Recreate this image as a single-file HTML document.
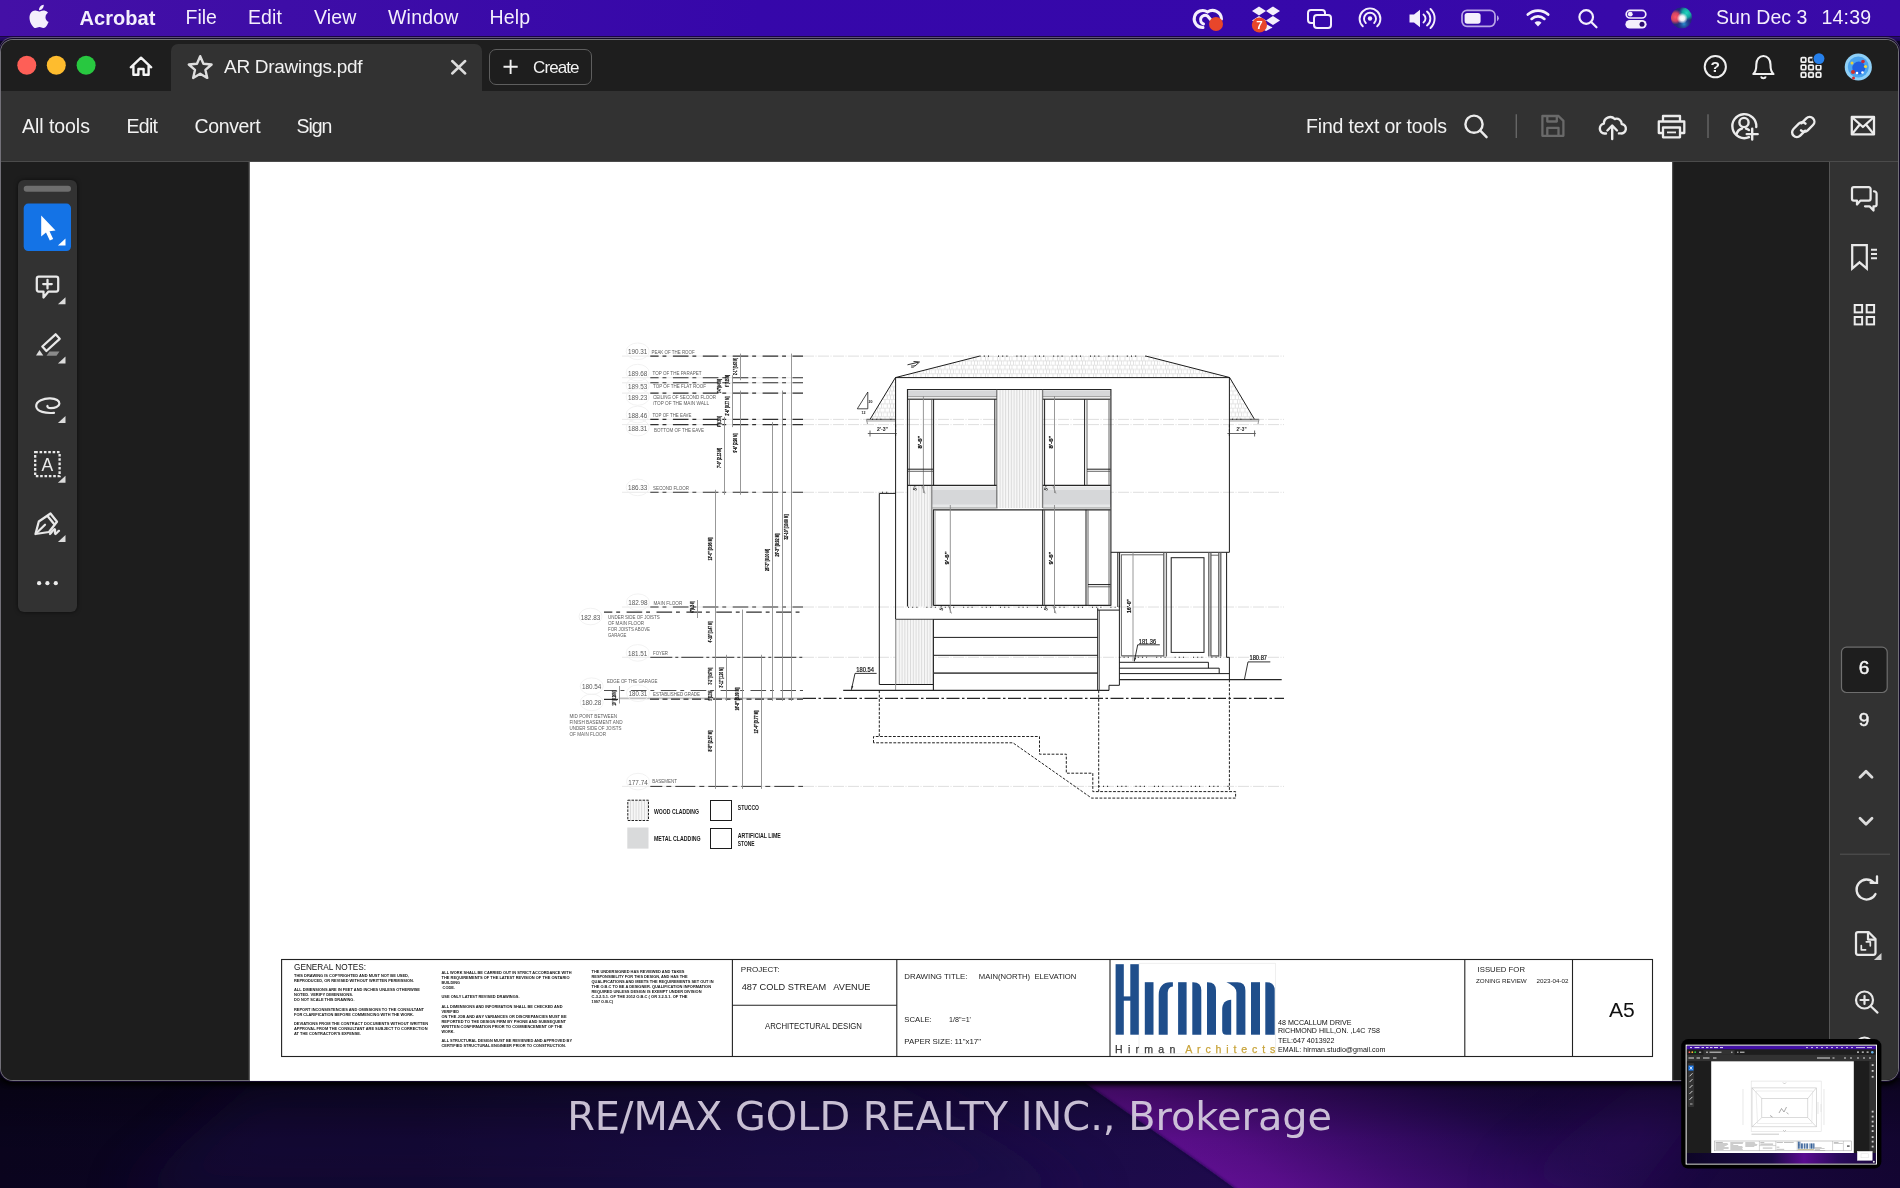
<!DOCTYPE html>
<html lang="en"><head><meta charset="utf-8"><title>AR Drawings.pdf</title>
<style>
html,body{margin:0;padding:0}
body{width:1900px;height:1188px;position:relative;overflow:hidden;background:#0b0420;font-family:"Liberation Sans",sans-serif;color:#fff}
.abs{position:absolute}
.t{position:absolute;white-space:nowrap;line-height:1}
#wall{position:absolute;left:0;top:0;width:1900px;height:1188px;overflow:hidden;background:#0d0526}
#menubar{position:absolute;left:0;top:0;width:1900px;height:36px;background:linear-gradient(90deg,#4410a6 0%,#3e0da7 15%,#3607aa 40%,#3608aa 70%,#3a0aa8 100%)}
#menubar .t{color:#f4effc;font-size:19.5px;top:8px}
#win{position:absolute;left:1px;top:40px;width:1897px;height:1039.5px;border-radius:12px;background:#1e1e1e;overflow:hidden;box-shadow:0 0 0 1px #727078, 0 0 0 2px #120828, 0 -1px 0 2px #5e5078, 0 3px 4px 2px #000}
#titlebar{position:absolute;left:0;top:0;width:1898px;height:50.5px;background:#1e1e1e}
#tab{position:absolute;left:170px;top:3.5px;width:311px;height:48px;background:#323232;border-radius:7px 7px 0 0}
#toolbar{position:absolute;left:-1px;top:50.5px;width:1899px;height:70px;background:#323232;border-bottom:1px solid #4b4b4b}
#toolbar .t{font-size:19.5px;color:#f2f2f2;top:26.5px}
#content{position:absolute;left:0;top:121.5px;width:1898px;height:920px;background:#1d1d1d}
#doc{position:absolute;left:249px;top:121.5px;width:1422px;height:920px;background:#fff}
#rpanel{position:absolute;left:1828px;top:121.5px;width:69px;height:920px;background:#323232;border-left:1px solid #555}
#palette{position:absolute;left:17px;top:140.3px;width:59.3px;height:432px;background:#323232;border-radius:6px;box-shadow:0 0 4px rgba(0,0,0,.6)}
svg{position:absolute;overflow:visible}
#menubar,#win,#dwg,#tb,#icons,#thumb,#wm{opacity:.999}
.ic{fill:none;stroke:#e8e8e8;stroke-width:2.25;stroke-linecap:round;stroke-linejoin:round}
</style></head><body>
<div id="wall">
<svg width="1900" height="1188" viewBox="0 0 1900 1188" style="left:0;top:0">
<defs>
<filter id="bl" x="-20%" y="-50%" width="140%" height="200%"><feGaussianBlur stdDeviation="1.2"/></filter>
<filter id="bl2" x="-20%" y="-50%" width="140%" height="200%"><feGaussianBlur stdDeviation="25"/></filter>
<linearGradient id="wg" x1="0" y1="0" x2="1" y2="0"><stop offset="0" stop-color="#0a041e"/><stop offset="0.22" stop-color="#0d0526"/><stop offset="0.4" stop-color="#160a3e"/><stop offset="0.57" stop-color="#1c0b4a"/><stop offset="0.75" stop-color="#220950"/><stop offset="0.88" stop-color="#1a0742"/><stop offset="1" stop-color="#130532"/></linearGradient>
<linearGradient id="vg" x1="0" y1="0" x2="0" y2="1"><stop offset="0" stop-color="#000" stop-opacity=".6"/><stop offset=".12" stop-color="#000" stop-opacity=".3"/><stop offset=".55" stop-color="#000" stop-opacity=".06"/><stop offset="1" stop-color="#000" stop-opacity="0"/></linearGradient>
<linearGradient id="sw" gradientUnits="userSpaceOnUse" x1="1160" y1="1135" x2="1308" y2="923"><stop offset="0" stop-color="#5f0f91"/><stop offset=".12" stop-color="#590e8b"/><stop offset=".4" stop-color="#3f0b71"/><stop offset=".7" stop-color="#290958"/><stop offset="1" stop-color="#1a0742" stop-opacity="0"/></linearGradient>
<clipPath id="swc"><path d="M1040 1052 L1082 1081 L1100 1093.800 L1180.800 1150 Q1225 1181 1250 1200 L1900 1200 L1900 1052 Z"/></clipPath>
</defs>
<rect x="0" y="1070" width="1900" height="118" fill="url(#wg)"/>
<path d="M250 1085 L900 1085 L1100 1200 L120 1200 Z" fill="#1c0a4a" filter="url(#bl2)" opacity=".45"/>
<g clip-path="url(#swc)"><rect x="1000" y="1070" width="900" height="130" fill="url(#sw)"/></g>
<path d="M1060 1066 L1082 1081 L1100 1093.800 L1180.800 1150 Q1225 1181 1250 1200" fill="none" stroke="#160740" stroke-width="2.500" filter="url(#bl)" opacity=".5"/>
<path d="M1500 1188 L1640 1081 L1720 1081 L1640 1188 Z" fill="#3a0c70" filter="url(#bl2)" opacity=".35"/>
<rect x="0" y="1078" width="1900" height="110" fill="url(#vg)"/>
</svg></div>
<div id="menubar">
<span class="t" style="left:79.5px;font-weight:bold;font-size:20px;top:7.5px;letter-spacing:.05px">Acrobat</span>
<span class="t" style="left:185.5px">File</span>
<span class="t" style="left:248px;letter-spacing:.1px">Edit</span>
<span class="t" style="left:314px;letter-spacing:.15px">View</span>
<span class="t" style="left:388px;letter-spacing:.2px">Window</span>
<span class="t" style="left:489.5px;letter-spacing:.2px">Help</span>
<span class="t" style="left:1716px;letter-spacing:.05px">Sun Dec 3</span>
<span class="t" style="left:1821.5px;letter-spacing:.2px">14:39</span>
</div>
<div class="abs" style="left:0;top:36px;width:1900px;height:5px;background:linear-gradient(180deg,#1a0840 0,#1a0840 1px,#2c0a78 1px,#1c0850 100%)"></div>
<div id="win">
<div id="titlebar"></div>
<div id="tab"></div>
<span class="t" style="left:223px;top:16.5px;font-size:19px;color:#f2f2f2;letter-spacing:-.28px">AR Drawings.pdf</span>
<div class="abs" style="left:487.700px;top:9.300px;width:103.400px;height:35.400px;border:1px solid #5e5e5e;border-radius:7px;box-sizing:border-box"></div>
<span class="t" style="left:532px;top:18.500px;font-size:17px;color:#f2f2f2;letter-spacing:-.9px">Create</span>
<div id="toolbar">
<span class="t" style="left:22px;letter-spacing:-.05px">All tools</span>
<span class="t" style="left:126.5px;letter-spacing:-.7px">Edit</span>
<span class="t" style="left:194.5px;letter-spacing:-.35px">Convert</span>
<span class="t" style="left:296.5px;letter-spacing:-1.1px">Sign</span>
<span class="t" style="left:1306px;letter-spacing:-.18px">Find text or tools</span>
</div>
<div id="content"></div>
<div id="doc"></div>
<div id="rpanel"></div>
<div id="palette"></div>
</div>
<svg id="icons" width="1900" height="1188" viewBox="0 0 1900 1188" style="left:0;top:0;pointer-events:none">
<defs>
<radialGradient id="siri" cx=".5" cy=".5" r=".5"><stop offset="0" stop-color="#e8f0ff"/><stop offset=".35" stop-color="#4fb4e8"/><stop offset=".7" stop-color="#6a3fc8"/><stop offset="1" stop-color="#2a1a6a"/></radialGradient>
<linearGradient id="siri2" x1="0" y1="0" x2="1" y2="1"><stop offset="0" stop-color="#ff3a5e"/><stop offset=".5" stop-color="#45c8f0" stop-opacity=".2"/><stop offset="1" stop-color="#34d0a0"/></linearGradient>
</defs>
<g transform="translate(27.3 4.8) scale(.98 .97)" fill="#f4effc"><path d="M12.152 6.896c-.948 0-2.415-1.078-3.96-1.04-2.04.027-3.91 1.183-4.961 3.014-2.117 3.675-.546 9.103 1.519 12.09 1.013 1.454 2.208 3.09 3.792 3.039 1.52-.065 2.09-.987 3.935-.987 1.831 0 2.35.987 3.96.948 1.637-.026 2.676-1.48 3.676-2.948 1.156-1.688 1.636-3.325 1.662-3.415-.039-.013-3.182-1.221-3.22-4.857-.026-3.04 2.48-4.494 2.597-4.559-1.429-2.09-3.623-2.324-4.39-2.376-2-.156-3.675 1.09-4.61 1.09zM15.53 3.83c.843-1.012 1.4-2.427 1.245-3.83-1.207.052-2.662.805-3.532 1.818-.78.896-1.454 2.338-1.273 3.714 1.338.104 2.715-.688 3.559-1.701"/></g>
<g fill="none" stroke="#f4effc" stroke-width="3" stroke-linecap="round"><path d="M1203 27.5 a8.5 8.5 0 1 1 4.5 -15.5 a9 9 0 0 1 14 7"/><path d="M1203.500 24 a4.500 4.500 0 1 1 4 -8 l6 7"/></g>
<circle cx="1216" cy="24" r="7" fill="#e8462a"/>
<g fill="#f4effc"><path d="M1252 11 L1259 6.4 L1266 11 L1259 15.6 Z"/><path d="M1266 11 L1273 6.4 L1280 11 L1273 15.6 Z"/><path d="M1252 20.5 L1259 15.9 L1266 20.5 L1259 25.1 Z"/><path d="M1266 20.5 L1273 15.9 L1280 20.5 L1273 25.1 Z"/><path d="M1259.5 27.5 L1266 23.9 L1272.5 27.5 L1266 31.1 Z"/></g>
<circle cx="1259.4" cy="25" r="7.6" fill="#e8462a"/><text x="1259.4" y="29" font-family="Liberation Sans, sans-serif" font-size="11.5" font-weight="bold" fill="#fff" text-anchor="middle">7</text>
<g fill="none" stroke="#f4effc" stroke-width="2"><rect x="1308" y="10" width="17" height="13" rx="3"/><rect x="1314" y="15" width="17" height="13" rx="3" fill="#3608aa"/></g>
<g fill="none" stroke="#f4effc" stroke-width="1.9" stroke-linecap="round"><circle cx="1370" cy="18.500" r="2.200" fill="#f4effc" stroke="none"/><path d="M1365.800 23 a6 6 0 1 1 8.400 0"/><path d="M1362.800 26.300 a10.400 10.400 0 1 1 14.400 0"/></g>
<g fill="#f4effc"><path d="M1409.500 14.500 h4.500 l6 -4.800 v17.600 l-6 -4.800 h-4.500 z"/></g><g fill="none" stroke="#f4effc" stroke-width="1.900" stroke-linecap="round"><path d="M1423.500 14.500 a5 5 0 0 1 0 8"/><path d="M1427 11.500 a9 9 0 0 1 0 14"/><path d="M1430.500 9 a13 13 0 0 1 0 19"/></g>
<rect x="1462" y="10.300" width="33" height="16" rx="5" fill="none" stroke="#b9a6e6" stroke-width="1.700"/><rect x="1464.600" y="12.900" width="16" height="10.800" rx="2.600" fill="#f4effc"/><path d="M1497 15.300 a3.400 3.400 0 0 1 0 6 z" fill="#b9a6e6"/>
<g fill="none" stroke="#f4effc" stroke-width="2.700" stroke-linecap="round"><path d="M1527.800 14.600 a15 15 0 0 1 20.400 0"/><path d="M1531.600 18.900 a9.600 9.600 0 0 1 12.800 0"/></g><path d="M1534.500 22.700 a5 5 0 0 1 7 0 l-3.500 3.800 z" fill="#f4effc"/>
<g fill="none" stroke="#f4effc" stroke-width="2.200" stroke-linecap="round"><circle cx="1586.200" cy="17" r="6.800"/><path d="M1591.200 22 l5.300 5.300"/></g>
<rect x="1626.200" y="10.400" width="19.600" height="7.600" rx="3.800" fill="none" stroke="#f4effc" stroke-width="1.700"/><circle cx="1630.300" cy="14.200" r="2.400" fill="#f4effc"/><rect x="1625.400" y="20" width="21.200" height="8.600" rx="4.300" fill="#f4effc"/><circle cx="1642" cy="24.300" r="2.500" fill="#2a0a70"/>
<defs><clipPath id="sc"><circle cx="1681.600" cy="17.900" r="10.600"/></clipPath><radialGradient id="sr"><stop offset="0" stop-color="#ff5566"/><stop offset=".55" stop-color="#f0485e" stop-opacity=".85"/><stop offset="1" stop-color="#e04060" stop-opacity="0"/></radialGradient><radialGradient id="st"><stop offset="0" stop-color="#22d8c0"/><stop offset=".55" stop-color="#14b8a8" stop-opacity=".85"/><stop offset="1" stop-color="#109a98" stop-opacity="0"/></radialGradient><radialGradient id="sb2"><stop offset="0" stop-color="#2a8ed0"/><stop offset="1" stop-color="#1a4a9a" stop-opacity="0"/></radialGradient><radialGradient id="swh"><stop offset="0" stop-color="#fff"/><stop offset=".45" stop-color="#fff" stop-opacity=".9"/><stop offset="1" stop-color="#fff" stop-opacity="0"/></radialGradient></defs><g clip-path="url(#sc)"><circle cx="1681.600" cy="17.900" r="10.600" fill="#222a7c"/><circle cx="1684" cy="24" r="7" fill="url(#sb2)"/><circle cx="1675.500" cy="17" r="7.500" fill="url(#sr)"/><circle cx="1686.500" cy="13" r="8" fill="url(#st)"/><circle cx="1682.300" cy="18.300" r="5.500" fill="url(#swh)"/></g>
<circle cx="26.800" cy="65.300" r="9.500" fill="#fe5f57"/><circle cx="56.300" cy="65.300" r="9.500" fill="#febc2e"/><circle cx="86.100" cy="65.300" r="9.500" fill="#28c840"/>
<path class="ic" d="M130.800 67.300 L141 57.700 L151.200 67.300 M133.400 65.800 V74.800 H138.400 V69 H143.600 V74.800 H148.600 V65.800" style="stroke-width:2.400;stroke:#f4f4f4"/>
<polygon points="200.20,56.20 203.43,63.75 211.61,64.49 205.43,69.90 207.25,77.91 200.20,73.70 193.15,77.91 194.97,69.90 188.79,64.49 196.97,63.75" fill="none" stroke="#dedede" stroke-width="2.400" stroke-linejoin="round"/>
<path d="M452.200 61 L465.200 73.500 M465.200 61 L452.200 73.500" stroke="#dcdcdc" stroke-width="2.500" stroke-linecap="round"/>
<path d="M503.500 66.800 H517.700 M510.600 59.700 V73.900" stroke="#f0f0f0" stroke-width="1.900"/>
<circle cx="1715.300" cy="66.700" r="10.600" fill="none" stroke="#f0f0f0" stroke-width="2"/><text x="1715.300" y="72.200" font-family="Liberation Sans, sans-serif" font-size="15.500" font-weight="bold" fill="#f0f0f0" text-anchor="middle">?</text>
<path d="M1753.300 74 c3.200 -2.600 3 -6 3 -9.500 c0 -5 3 -8.500 7.100 -8.500 c4.100 0 7.100 3.500 7.100 8.500 c0 3.500 -.2 6.900 3 9.500 z" fill="none" stroke="#f0f0f0" stroke-width="2.100" stroke-linejoin="round"/><path d="M1761 76.500 a2.500 2.500 0 0 0 4.800 0" fill="none" stroke="#f0f0f0" stroke-width="2"/>
<g fill="none" stroke="#f0f0f0" stroke-width="1.700"><rect x="1801.2" y="57.6" width="4.600" height="4.600" rx="1"/><rect x="1808.7" y="57.6" width="4.600" height="4.600" rx="1"/><rect x="1816.2" y="57.6" width="4.600" height="4.600" rx="1"/><rect x="1801.2" y="65.1" width="4.600" height="4.600" rx="1"/><rect x="1808.7" y="65.1" width="4.600" height="4.600" rx="1"/><rect x="1816.2" y="65.1" width="4.600" height="4.600" rx="1"/><rect x="1801.2" y="72.6" width="4.600" height="4.600" rx="1"/><rect x="1808.7" y="72.6" width="4.600" height="4.600" rx="1"/><rect x="1816.2" y="72.6" width="4.600" height="4.600" rx="1"/></g>
<circle cx="1819" cy="58.600" r="6.700" fill="#1e1e1e"/><circle cx="1819" cy="58.600" r="5.400" fill="#2680eb"/>
<circle cx="1858.300" cy="67" r="13.600" fill="#8fd0f7"/><circle cx="1858.300" cy="67" r="10.500" fill="#4aa3ee"/><circle cx="1858.800" cy="68" r="6.500" fill="#1f5fe0"/><circle cx="1853" cy="72" r="2" fill="#d0302a"/><circle cx="1852" cy="63" r="1.500" fill="#e8d23a"/><circle cx="1863" cy="61.500" r="1.800" fill="#c8283a"/><circle cx="1865.500" cy="66.500" r="1.600" fill="#f0d840"/><circle cx="1857" cy="73" r="1.300" fill="#fff"/><circle cx="1862.500" cy="72.500" r="1.300" fill="#fff"/><circle cx="1853.500" cy="78" r="1.500" fill="#d03030"/>
<g class="ic" style="stroke:#ececec;stroke-width:2.400"><circle cx="1474" cy="124.200" r="8.600"/><path d="M1480.300 130.600 L1486.600 137.200"/></g>
<path d="M1516.300 114.300 V138" stroke="#666" stroke-width="1.400"/><path d="M1708 114.300 V138" stroke="#666" stroke-width="1.400"/>
<g fill="none" stroke="#6a6a6a" stroke-width="2.300" stroke-linejoin="round"><path d="M1542.400 116 H1558.500 L1563.400 120.900 V135.800 H1542.400 Z"/><path d="M1547.300 116 V121.500 H1556.800 V116"/><path d="M1547.300 135.800 V127.800 H1558.500 V135.800"/></g>
<g class="ic" style="stroke:#ececec;stroke-width:2.400"><path d="M1606 133.500 h-1.500 a5 5 0 0 1 -.6 -9.900 a6.300 6.300 0 0 1 10.800 -4.600 a5.200 5.200 0 0 1 7 5 a4.700 4.700 0 0 1 -1.200 9.400 h-1.600"/><path d="M1612.200 139 V126 M1607.400 130.500 L1612.200 125.500 L1617 130.500"/></g>
<g fill="none" stroke="#ececec" stroke-width="2.300" stroke-linejoin="round"><path d="M1663 121.500 V116 H1680 V121.500"/><path d="M1663 133 H1658.800 V121.500 H1684.300 V133 H1680"/><rect x="1663" y="127.500" width="17" height="9.800"/><path d="M1667 132.400 H1676" stroke-width="1.800"/></g>
<g class="ic" style="stroke:#ececec;stroke-width:2.400"><path d="M1749 137.200 a12 12 0 1 1 7.300 -10.200"/><circle cx="1744" cy="122.500" r="4.600"/><path d="M1736.500 134.500 c1 -4 3.500 -5.500 5.500 -6 M1746 128.500 c1 .3 2 .8 3 1.600"/><path d="M1752.200 128.600 V139.600 M1746.700 134.100 H1757.700"/></g>
<g class="ic" style="stroke:#ececec;stroke-width:2.400"><path d="M1801.300 123.300 l5 -5 a4.700 4.700 0 0 1 6.700 6.700 l-5.300 5.300 a4.700 4.700 0 0 1 -6.700 0"/><path d="M1805.200 130.700 l-5 5 a4.700 4.700 0 0 1 -6.700 -6.700 l5.300 -5.300 a4.700 4.700 0 0 1 6.700 0"/></g>
<g fill="none" stroke="#ececec" stroke-width="2.300" stroke-linejoin="round"><rect x="1851.800" y="117" width="22.200" height="17.400"/><path d="M1851.800 117 L1862.900 127 L1874 117 M1851.800 134.400 L1859.800 124.500 M1874 134.400 L1866 124.500"/></g>
<rect x="23.700" y="185.800" width="47.300" height="6" rx="3" fill="#6e6e6e"/>
<rect x="23.700" y="203.600" width="47.300" height="47.400" rx="4.500" fill="#1473e6"/>
<path d="M41.200 215.500 V236.500 L46 232.500 L49.800 240.500 L53.200 239 L49.500 231.200 L55.500 230.500 Z" fill="#fff"/>
<path d="M65.5 245.5 v-7 l-7.600 7 z" fill="#fff"/>
<path class="ic" d="M38.800 276.700 H56.200 a2 2 0 0 1 2 2 V289.500 a2 2 0 0 1 -2 2 H48.500 L43.500 297.500 V291.500 H38.800 a2 2 0 0 1 -2 -2 V278.700 a2 2 0 0 1 2 -2 Z M47.500 279.800 V288.400 M43.200 284.100 H51.800"/>
<path d="M65.5 304.3 v-7 l-7.600 7 z" fill="#dcdcdc"/>
<g class="ic"><path d="M42.300 346.500 L55.600 334.300 L59.700 338.800 L46.400 351 Z"/></g><path d="M36 355.500 L39.500 350 L43.300 355.500 Z" fill="#dcdcdc"/><path d="M46.500 355.800 L49.500 351.500 H59.500 L56.500 355.800 Z" fill="#8a8a8a"/>
<path d="M65.5 363.4 v-7 l-7.600 7 z" fill="#dcdcdc"/>
<path class="ic" d="M54 412.800 c-8 .8 -17.500 -1 -17.800 -6.500 c-.3 -5.500 8 -8.200 14 -8 c6 .2 9.400 2.600 9.200 5.400 c-.2 2.800 -4.500 4.500 -8.500 4.500 c-2.800 0 -4 -1.200 -3.400 -2.300" style="stroke-width:2.200"/>
<path d="M65.5 423 v-7 l-7.600 7 z" fill="#dcdcdc"/>
<rect x="35.200" y="452.200" width="24.400" height="24" fill="none" stroke="#ececec" stroke-width="2.300" stroke-dasharray="2.600 1.750"/><text x="47.400" y="471" font-family="Liberation Sans, sans-serif" font-size="17.500" fill="#ececec" text-anchor="middle">A</text>
<path d="M65.5 482.8 v-7 l-7.600 7 z" fill="#dcdcdc"/>
<g class="ic"><path d="M35.500 534 L38.800 521.500 L50.500 513.500 L57 521.800 L49 532 Z"/><path d="M36.500 533 L45 524.800"/><path d="M47.500 516 L54.500 524.500"/><path d="M50 534 c2 -2 3.500 -5 4.500 -5 c1.500 0 -.5 5 1 5 c1 0 2 -2.500 3.500 -3.200"/></g>
<path d="M65.5 541.9 v-7 l-7.600 7 z" fill="#dcdcdc"/>
<circle cx="39.100" cy="583.200" r="2.100" fill="#ececec"/><circle cx="47.400" cy="583.200" r="2.100" fill="#ececec"/><circle cx="55.800" cy="583.200" r="2.100" fill="#ececec"/>
<g class="ic"><path d="M1853.800 187.200 H1868.800 a1.800 1.800 0 0 1 1.800 1.800 V198.800 a1.800 1.800 0 0 1 -1.800 1.800 H1860.500 L1857 204.500 V200.600 H1853.800 a1.800 1.800 0 0 1 -1.800 -1.800 V189 a1.800 1.800 0 0 1 1.800 -1.800 Z"/><path d="M1874 191.300 a2.500 2.500 0 0 1 2.600 2.500 V204.500 a1.800 1.800 0 0 1 -1.800 1.800 h-1.300 V210.500 L1869.500 206.300 H1865"/></g>
<g class="ic"><path d="M1852.200 245 H1866.800 V268.500 L1859.500 262.300 L1852.200 268.500 Z" style="stroke-linejoin:miter"/><path d="M1871 249.800 H1877 M1871 254 H1877 M1871 258.200 H1877" style="stroke-width:1.900;stroke-linecap:butt"/></g>
<g fill="none" stroke="#ececec" stroke-width="2"><rect x="1854.700" y="305" width="7.400" height="7.400"/><rect x="1866.700" y="305" width="7.400" height="7.400"/><rect x="1854.700" y="317" width="7.400" height="7.400"/><rect x="1866.700" y="317" width="7.400" height="7.400"/></g>
<rect x="1841.500" y="647.100" width="45.700" height="45.400" rx="5" fill="#1e1e1e" stroke="#6e6e6e" stroke-width="1.200"/>
<text x="1864" y="673.600" font-family="Liberation Sans, sans-serif" font-size="19" fill="#f2f2f2" stroke="#f2f2f2" stroke-width=".45" text-anchor="middle">6</text>
<text x="1864" y="725.600" font-family="Liberation Sans, sans-serif" font-size="19" fill="#f2f2f2" stroke="#f2f2f2" stroke-width=".45" text-anchor="middle">9</text>
<path d="M1860 777.300 L1866 771.300 L1872 777.300" fill="none" stroke="#dcdcdc" stroke-width="2.800" stroke-linecap="round" stroke-linejoin="round"/>
<path d="M1860 818.300 L1866 824.300 L1872 818.300" fill="none" stroke="#dcdcdc" stroke-width="2.800" stroke-linecap="round" stroke-linejoin="round"/>
<path d="M1840 854.200 H1890" stroke="#555" stroke-width="1"/>
<g class="ic" style="stroke-width:2.300"><path d="M1875.500 894 a10 10 0 1 1 -1.800 -11.500"/><path d="M1870.500 882.800 H1877 V876.300" style="stroke-linejoin:miter"/></g>
<g class="ic"><path d="M1858 932 H1868.500 L1875.500 939 V952.800 a2 2 0 0 1 -2 2 H1858 a2 2 0 0 1 -2 -2 V934 a2 2 0 0 1 2 -2 Z"/><path d="M1868 932.500 V939.500 H1875"/><path d="M1861.300 945.500 V949.800 H1865.600 M1870.300 945.800 V941.800 H1866.300" style="stroke-width:1.700"/></g>
<path d="M1881.5 960 v-7 l-7.600 7 z" fill="#cfcfcf"/>
<g class="ic" style="stroke-width:2.200"><circle cx="1864.500" cy="1000" r="8.500"/><path d="M1870.800 1006.300 L1877.500 1012.600"/><path d="M1864.500 996 V1004 M1860.500 1000 H1868.500"/></g>
<g class="ic" style="stroke-width:2.200"><circle cx="1864.500" cy="1046" r="8.500"/><path d="M1860.500 1046 H1868.500"/></g>
</svg>
<svg id="dwg" width="1900" height="1188" viewBox="0 0 1900 1188" style="left:0;top:0;pointer-events:none" font-family="Liberation Sans, sans-serif">
<defs>
<style>
.k{fill:none;stroke:#1c1c1c;stroke-width:1}
.k2{fill:none;stroke:#262626;stroke-width:1.15}
.g{fill:none;stroke:#8c8c8c;stroke-width:.9}
.gd{fill:none;stroke:#555;stroke-width:.9}
.lg{fill:none;stroke:#d6d6d6;stroke-width:.8;stroke-dasharray:11 1.500 1 1.500}
.vl{fill:none;stroke:#e4e4e4;stroke-width:.8}
.lv{fill:none;stroke:#303030;stroke-width:1.08;stroke-dasharray:15.600 3.900 3.900 6.500;stroke-dashoffset:7.300}
.ds{fill:none;stroke:#222;stroke-width:1;stroke-dasharray:2.800 1.500}
.dt{fill:none;stroke:#222;stroke-width:1.100;stroke-dasharray:1 3.200 1 3.200 1 9}
</style>
<pattern id="wood" width="2.800" height="10" patternUnits="userSpaceOnUse"><rect width="2.800" height="10" fill="#f7f7f7"/><path d="M.5 0V10" stroke="#cdcdcd" stroke-width=".7"/></pattern>
<pattern id="shg" width="12" height="8.600" patternUnits="userSpaceOnUse" x="895" y="356.100"><path d="M0 .4H12M0 4.700H12M2 .4V4.700M6.500 .4V4.700M9 .4V4.700M0 4.700V8.600M4.300 4.700V8.600M7.500 4.700V8.600M10.500 4.700V8.600" stroke="#d9d9d9" stroke-width=".7" fill="none"/></pattern>
</defs>
<rect x="250" y="1078" width="1422" height="2.900" fill="#fff"/><rect x="248.700" y="162" width="1.300" height="918.500" fill="#777" opacity=".75"/><rect x="1672" y="162" width="1.200" height="918.500" fill="#5a5a5a" opacity=".8"/>
<path class="lg" d="M803 356.1L1284 356.1" />
<path class="vl" d="M622 356.1L803 356.1" />
<path class="lg" d="M803 419.4L1284 419.4" />
<path class="vl" d="M622 419.4L803 419.4" />
<path class="lg" d="M803 424.6L1284 424.6" />
<path class="vl" d="M622 424.6L803 424.6" />
<path class="lg" d="M803 492.3L1284 492.3" />
<path class="vl" d="M622 492.3L803 492.3" />
<path class="lg" d="M803 607L1284 607" />
<path class="vl" d="M622 607L803 607" />
<path class="lg" d="M803 657.3L1284 657.3" />
<path class="vl" d="M622 657.3L803 657.3" />
<path class="lg" d="M803 786.4L1284 786.4" />
<path class="vl" d="M622 786.4L803 786.4" />
<path class="vl" d="M622 377.7L803 377.7" />
<path class="vl" d="M622 382.8L803 382.8" />
<path class="vl" d="M622 393.1L803 393.1" />
<path d="M895.400 377.600L979.600 356.100L1146 356.100L1229.600 377.500Z" fill="url(#shg)"/>
<path d="M870 419.400L895.400 377.600L895.400 419.400Z" fill="url(#shg)"/>
<path d="M1229.600 377.500L1254.500 419.400L1229.600 419.400Z" fill="url(#shg)"/>
<path class="k" d="M870 419.4L895.4 377.6L979.6 356.1" />
<path class="k" d="M1146 356.1L1229.6 377.5L1254.5 419.4" />
<path class="dt" d="M979.6 356.1L1146 356.1" />
<path class="k" d="M895.4 377.6L1229.6 377.6" />
<rect x="866.500" y="419.300" width="29" height="2.600" fill="#cfcfcf"/><rect x="1229.600" y="419.300" width="29.400" height="2.600" fill="#cfcfcf"/>
<path class="gd" d="M866.5 419.3L895.4 419.3" />
<path class="gd" d="M1229.6 419.3L1259 419.3" />
<path class="g" d="M866.5 419.3L867.5 424" />
<path class="g" d="M1259 419.3L1258 424" />
<path class="dt" d="M872 419.3L893 419.3" />
<path class="dt" d="M1232 419.3L1253 419.3" />
<path class="k" d="M895.6 377.6L895.6 619.3L1097.9 619.3" />
<path class="k" d="M1229.4 377.5L1229.4 552.3L1110.9 552.3" />
<path class="gd" d="M867.8 433.5L896.8 433.5" />
<path class="gd" d="M870 430.5L870 436.5" />
<path class="gd" d="M1227.4 433.5L1255.8 433.5" />
<path class="gd" d="M1254.6 430.5L1254.6 436.5" />
<path class="ds" d="M895.6 424.6L895.6 436" />
<path class="ds" d="M1229.4 424.6L1229.4 436" />
<text x="877" y="431" font-size="5.6" fill="#222" font-weight="bold" text-anchor="start" textLength="11" lengthAdjust="spacingAndGlyphs" >2'-3&quot;</text>
<text x="1236.6" y="431" font-size="5.6" fill="#222" font-weight="bold" text-anchor="start" textLength="10" lengthAdjust="spacingAndGlyphs" >2'-3&quot;</text>
<path class="k" d="M857.3 408.8L867.8 392L867.8 408.8Z" style="stroke-width:.8"/>
<text x="861.5" y="413.6" font-size="3.6" fill="#222" font-weight="bold" text-anchor="start" >12</text>
<text x="868.6" y="403" font-size="3.6" fill="#222" font-weight="bold" text-anchor="start" >20</text>
<path d="M907.500 364.800L918 362.300M913.500 361.500L919.500 362L915 366" class="k" style="stroke-width:.9"/>
<text x="911" y="367.8" font-size="3" fill="#222" font-weight="bold" text-anchor="start" >UP</text>
<rect x="908" y="390.300" width="89.300" height="6.200" fill="#d6d7d9"/><rect x="1042.500" y="390.300" width="68" height="6.200" fill="#d6d7d9"/>
<rect x="932" y="486.400" width="65.500" height="21.500" fill="#e6e7e8"/><rect x="1042.500" y="486.400" width="68" height="21.500" fill="#e6e7e8"/>
<rect x="932" y="490" width="65.500" height="14.500" fill="#d6d7d9"/><rect x="1042.500" y="490" width="68" height="14.500" fill="#d6d7d9"/>
<rect x="997.700" y="390" width="44.800" height="118" fill="url(#wood)"/>
<rect x="908" y="486" width="23.600" height="120.500" fill="url(#wood)"/>
<rect x="896" y="619.800" width="37" height="64.500" fill="url(#wood)"/>
<path class="k2" d="M907.5 606.5L907.5 389.5L1110.9 389.5L1110.9 605.7" />
<path class="gd" d="M908 399.2L997 399.2" style="stroke-width:1.6"/>
<path class="gd" d="M1042.7 399.2L1110.5 399.2" style="stroke-width:1.6"/>
<path class="g" d="M908 396.7L997 396.7" />
<path class="g" d="M1042.7 396.7L1110.5 396.7" />
<path class="k2" d="M908 485.4L997 485.4" />
<path class="k2" d="M1042.7 485.4L1110.5 485.4" />
<path class="gd" d="M909.3 399.2L909.3 485.4" />
<path class="g" d="M923.4 396L923.4 493" />
<path class="gd" d="M931.8 399.2L931.8 485.4" />
<path class="k" d="M933.6 399.2L933.6 485.4" />
<path class="k" d="M994.8 399.2L994.8 485.4" />
<path class="gd" d="M996.8 389.5L996.8 508" />
<path class="k" d="M908 469.2L933 469.2" />
<path class="gd" d="M908 471.3L933 471.3" />
<path class="gd" d="M1042.7 389.5L1042.7 508" />
<path class="k" d="M1044.6 399.2L1044.6 485.4" />
<path class="g" d="M1054.5 396L1054.5 493" />
<path class="k" d="M1084.6 399.2L1084.6 485.4" />
<path class="gd" d="M1087 399.2L1087 485.4" />
<path class="gd" d="M1109 399.2L1109 485.4" />
<path class="k" d="M1087 469.2L1110.5 469.2" />
<path class="gd" d="M1087 471.3L1110.5 471.3" />
<path class="gd" d="M931.8 485.4L931.8 606.5" />
<path class="g" d="M932 508L997.5 508" />
<path class="g" d="M1042.7 508L1110.5 508" />
<path class="k2" d="M933.4 605.4L933.4 509.8L1110.5 509.8" />
<path class="k2" d="M933.4 605.4L1110.9 605.4" />
<path class="g" d="M935 510.5L935 605" />
<path class="g" d="M950.3 505L950.3 613" />
<path class="g" d="M1054.5 505L1054.5 613" />
<path class="k2" d="M1042.7 509.8L1042.7 605.4" />
<path class="gd" d="M1044.6 509.8L1044.6 605.4" />
<path class="k" d="M1086 509.8L1086 605.4" />
<path class="gd" d="M1088 509.8L1088 605.4" />
<path class="gd" d="M1109 509.8L1109 605.4" />
<path class="k" d="M1088 584.6L1110.5 584.6" />
<path class="gd" d="M1088 586.8L1110.5 586.8" />
<path class="dt" d="M908 607.2L1119 607.2" />
<text x="921.7" y="442" font-size="5.8" fill="#111" font-weight="bold" text-anchor="middle" textLength="13" lengthAdjust="spacingAndGlyphs" transform="rotate(-90 921.7 442)" stroke="#111" stroke-width=".2">8'-6&quot;</text>
<text x="1052.7" y="442" font-size="5.8" fill="#111" font-weight="bold" text-anchor="middle" textLength="13" lengthAdjust="spacingAndGlyphs" transform="rotate(-90 1052.7 442)" stroke="#111" stroke-width=".2">8'-6&quot;</text>
<text x="948.6" y="558" font-size="5.8" fill="#111" font-weight="bold" text-anchor="middle" textLength="13" lengthAdjust="spacingAndGlyphs" transform="rotate(-90 948.6 558)" stroke="#111" stroke-width=".2">9'-6&quot;</text>
<text x="1052.7" y="558" font-size="5.8" fill="#111" font-weight="bold" text-anchor="middle" textLength="13" lengthAdjust="spacingAndGlyphs" transform="rotate(-90 1052.7 558)" stroke="#111" stroke-width=".2">9'-6&quot;</text>
<text x="916" y="491" font-size="5" fill="#111" font-weight="bold" text-anchor="start" transform="rotate(-70 916 491)" >5&quot;</text>
<path class="g" d="M922 486L925 493.5" />
<text x="1047" y="491" font-size="5" fill="#111" font-weight="bold" text-anchor="start" transform="rotate(-70 1047 491)" >5&quot;</text>
<path class="g" d="M1053 486L1056 493.5" />
<text x="942.5" y="611" font-size="5" fill="#111" font-weight="bold" text-anchor="start" transform="rotate(-70 942.5 611)" >5&quot;</text>
<path class="g" d="M948.5 606L951.5 613.5" />
<text x="1047" y="611" font-size="5" fill="#111" font-weight="bold" text-anchor="start" transform="rotate(-70 1047 611)" >5&quot;</text>
<path class="g" d="M1053 606L1056 613.5" />
<path class="k" d="M895.6 493.4L879.3 493.4L879.3 684.5L933.2 684.5" />
<path class="dt" d="M882 492.2L889 492.2" />
<path class="g" d="M895.6 619.3L895.6 690.4" />
<path class="k2" d="M933.4 619.3L933.4 690.4" />
<path class="k2" d="M843.2 690.4L1109 690.4" />
<path class="k" d="M933.7 637.4L1097.9 637.4" />
<path class="k" d="M933.7 655.3L1097.9 655.3" />
<path class="gd" d="M933.7 673.1L1097.9 673.1" style="stroke-width:1.700"/>
<path class="k2" d="M1097.7 608.2L1097.7 690.4" />
<path class="gd" d="M1099.4 610L1099.4 690.4" />
<path class="k" d="M1097.7 610.1L1119.4 610.1" />
<path class="k" d="M1119.4 605.7L1119.4 685.3L1109 685.3L1109 690.4" />
<path class="k" d="M876.6 673.4L855 673.4L851.4 689.8" style="stroke-width:.9"/>
<path d="M851.400 689.800l.2-4 1.700.4z" fill="#222"/>
<text x="856.2" y="671.8" font-size="7" fill="#111" font-weight="normal" text-anchor="start" textLength="17.8" lengthAdjust="spacingAndGlyphs" stroke="#111" stroke-width=".2">180.54</text>
<path class="k" d="M1117.8 552.3L1117.8 607" />
<path class="k" d="M1119.6 552.3L1119.6 607" />
<path class="gd" d="M1121.4 554.5L1121.4 655.9" />
<path class="gd" d="M1121.4 554.8L1163.6 554.8" />
<path class="gd" d="M1121.4 655.9L1163.6 655.9" style="stroke-width:1.300;stroke:#5e5e5e"/>
<path class="g" d="M1133 552.3L1133 661" />
<path class="gd" d="M1163.8 552.3L1163.8 656.5" style="stroke-width:1.300;stroke:#5e5e5e"/>
<path class="gd" d="M1166.4 552.3L1166.4 656.5" style="stroke-width:1.300;stroke:#5e5e5e"/>
<rect class="k" x="1171.200" y="557.700" width="32.800" height="94.700"/>
<path class="gd" d="M1208.8 552.3L1208.8 656.5" style="stroke-width:1.300;stroke:#5e5e5e"/>
<path class="gd" d="M1210.9 552.3L1210.9 656.5" style="stroke-width:1.300;stroke:#5e5e5e"/>
<path class="gd" d="M1211 555.2L1219 555.2" />
<path class="gd" d="M1211 655.9L1219 655.9" style="stroke-width:1.300;stroke:#5e5e5e"/>
<path class="gd" d="M1218.8 552.3L1218.8 656.5" style="stroke-width:1.300;stroke:#5e5e5e"/>
<path class="gd" d="M1220.8 552.3L1220.8 656.5" style="stroke-width:1.300;stroke:#5e5e5e"/>
<path class="k" d="M1226.6 552.3L1226.6 657.3" />
<path class="dt" d="M1119.4 657.3L1229.4 657.3" />
<path class="k" d="M1119.4 662.3L1208.4 662.3L1208.4 668.2" />
<path class="k" d="M1119.4 668.2L1219.2 668.2L1219.2 673.6" />
<path class="k" d="M1119.4 673.6L1229.4 673.6" />
<path class="k" d="M1226.5 657.3L1229.4 657.3" />
<path class="k" d="M1229.4 657.3L1229.4 679.6" />
<path class="k2" d="M1119.4 679.6L1281.7 679.6" />
<text x="1131" y="606" font-size="5.4" fill="#111" font-weight="bold" text-anchor="middle" textLength="14" lengthAdjust="spacingAndGlyphs" transform="rotate(-90 1131 606)" stroke="#111" stroke-width=".2">16'-0&quot;</text>
<path class="k" d="M1159.8 644.8L1137.7 644.8L1134.3 661.5" style="stroke-width:.9"/>
<path d="M1134.300 661.500l.1-4 1.700.4z" fill="#222"/>
<text x="1138.8" y="643.8" font-size="7" fill="#111" font-weight="normal" text-anchor="start" textLength="17.4" lengthAdjust="spacingAndGlyphs" stroke="#111" stroke-width=".2">181.36</text>
<path class="k" d="M1270.3 661.9L1248 661.9L1244.4 679.6" style="stroke-width:.9"/>
<text x="1249.5" y="660" font-size="7" fill="#111" font-weight="normal" text-anchor="start" textLength="17.5" lengthAdjust="spacingAndGlyphs" stroke="#111" stroke-width=".2">180.87</text>
<path d="M803 698.4H1284" fill="none" stroke="#262626" stroke-width="1.250" stroke-dasharray="13 2.500 2.500 2.500"/>
<path class="ds" d="M879.3 690.4L879.3 736.5" />
<path class="ds" d="M873.5 742.8L873.5 736.5L1039.5 736.5L1039.5 754.2L1066.3 754.2L1066.3 773.2L1092.8 773.2L1092.8 791.6L1235.6 791.6L1235.6 798.1L1091.6 798.1L1012.9 742.8L873.5 742.8" />
<path class="ds" d="M1098.7 690.4L1098.7 791.3" />
<path class="ds" d="M1229.4 679.6L1229.4 791.3" />
<path class="dt" d="M1098.7 786.4L1229.4 786.4" />
<path class="lv" d="M650.3 356.1L803 356.1" />
<path class="lv" d="M650.3 377.7L803 377.7" />
<path class="lv" d="M650.3 382.8L803 382.8" />
<path class="lv" d="M650.3 393.1L803 393.1" />
<path class="lv" d="M650.3 419.4L803 419.4" />
<path class="lv" d="M650.3 424.6L803 424.6" />
<path class="lv" d="M650.3 492.3L803 492.3" />
<path class="lv" d="M650.3 607L803 607" />
<path d="M650.300 786.4H803" fill="none" stroke="#333" stroke-width="1" stroke-dasharray="20 4 5 4" stroke-dashoffset="8"/>
<path class="lv" d="M604 612.1L803 612.1" />
<path d="M604 690.5H803" fill="none" stroke="#444" stroke-width=".95" stroke-dasharray="15.600 3.900 3.900 6.500" stroke-dashoffset="3"/>
<path d="M650.300 657.3H803" fill="none" stroke="#2e2e2e" stroke-width="1" stroke-dasharray="22 3 3 3"/>
<path d="M618.700 698.4H803" fill="none" stroke="#bdbdbd" stroke-width="1.600"/>
<path d="M604 699.4H618" fill="none" stroke="#2e2e2e" stroke-width="1.250"/>
<path d="M650 699.1H803" fill="none" stroke="#2e2e2e" stroke-width="1.300" stroke-dasharray="9 3.500 5 3.500"/>
<path class="g" d="M715.5 489.8L715.5 788.9" />
<path class="g" d="M724.5 416.9L724.5 494.8" />
<path class="g" d="M732.5 375.2L732.5 427.1" />
<path class="g" d="M740.5 353.6L740.5 380.2" />
<path class="g" d="M740.5 390.6L740.5 494.8" />
<path class="g" d="M726.5 654.8L726.5 700.9" />
<path class="g" d="M742.5 609.6L742.5 788.9" />
<path class="g" d="M761.5 654.8L761.5 788.9" />
<path class="g" d="M772.5 422.1L772.5 700.9" />
<path class="g" d="M782.5 390.6L782.5 700.9" />
<path class="g" d="M791.5 353.6L791.5 700.9" />
<path class="g" d="M697.5 600L697.5 618" />
<path class="g" d="M619.5 686L619.5 703.5" />
<text x="737.4" y="366.5" font-size="4.9" fill="#111" font-weight="bold" text-anchor="middle" textLength="17" lengthAdjust="spacingAndGlyphs" transform="rotate(-90 737.4 366.5)" stroke="#111" stroke-width=".22">2'-1&quot; [0.63 M]</text>
<text x="728.8" y="381" font-size="4.9" fill="#111" font-weight="bold" text-anchor="middle" textLength="12" lengthAdjust="spacingAndGlyphs" transform="rotate(-90 728.8 381)" stroke="#111" stroke-width=".22">6&quot; [0.15 M]</text>
<text x="721.3" y="386" font-size="4.9" fill="#111" font-weight="bold" text-anchor="middle" textLength="14" lengthAdjust="spacingAndGlyphs" transform="rotate(-90 721.3 386)" stroke="#111" stroke-width=".22">1'-6&quot; [0.45 M]</text>
<text x="728.8" y="406" font-size="4.9" fill="#111" font-weight="bold" text-anchor="middle" textLength="19" lengthAdjust="spacingAndGlyphs" transform="rotate(-90 728.8 406)" stroke="#111" stroke-width=".22">2'-6&quot; [0.77 M]</text>
<text x="721.3" y="421.5" font-size="4.9" fill="#111" font-weight="bold" text-anchor="middle" textLength="11" lengthAdjust="spacingAndGlyphs" transform="rotate(-90 721.3 421.5)" stroke="#111" stroke-width=".22">6&quot; [0.15 M]</text>
<text x="737.4" y="443" font-size="4.9" fill="#111" font-weight="bold" text-anchor="middle" textLength="19" lengthAdjust="spacingAndGlyphs" transform="rotate(-90 737.4 443)" stroke="#111" stroke-width=".22">9'-6&quot; [2.90 M]</text>
<text x="721.3" y="458" font-size="4.9" fill="#111" font-weight="bold" text-anchor="middle" textLength="20" lengthAdjust="spacingAndGlyphs" transform="rotate(-90 721.3 458)" stroke="#111" stroke-width=".22">7'-0&quot; [2.13 M]</text>
<text x="712.3" y="549" font-size="4.9" fill="#111" font-weight="bold" text-anchor="middle" textLength="23" lengthAdjust="spacingAndGlyphs" transform="rotate(-90 712.3 549)" stroke="#111" stroke-width=".22">13'-0&quot; [3.96 M]</text>
<text x="768.8" y="560" font-size="4.9" fill="#111" font-weight="bold" text-anchor="middle" textLength="22" lengthAdjust="spacingAndGlyphs" transform="rotate(-90 768.8 560)" stroke="#111" stroke-width=".22">26'-3&quot; [8.00 M]</text>
<text x="778.8" y="545" font-size="4.9" fill="#111" font-weight="bold" text-anchor="middle" textLength="23" lengthAdjust="spacingAndGlyphs" transform="rotate(-90 778.8 545)" stroke="#111" stroke-width=".22">29'-3&quot; [8.92 M]</text>
<text x="788.3" y="527" font-size="4.9" fill="#111" font-weight="bold" text-anchor="middle" textLength="25" lengthAdjust="spacingAndGlyphs" transform="rotate(-90 788.3 527)" stroke="#111" stroke-width=".22">32'-10&quot; [10.00 M]</text>
<text x="694.3" y="607" font-size="4.9" fill="#111" font-weight="bold" text-anchor="middle" textLength="11" lengthAdjust="spacingAndGlyphs" transform="rotate(-90 694.3 607)" stroke="#111" stroke-width=".22">6&quot; [0.15 M]</text>
<text x="712.3" y="632" font-size="4.9" fill="#111" font-weight="bold" text-anchor="middle" textLength="21" lengthAdjust="spacingAndGlyphs" transform="rotate(-90 712.3 632)" stroke="#111" stroke-width=".22">4'-10&quot; [1.47 M]</text>
<text x="712.3" y="676" font-size="4.9" fill="#111" font-weight="bold" text-anchor="middle" textLength="17" lengthAdjust="spacingAndGlyphs" transform="rotate(-90 712.3 676)" stroke="#111" stroke-width=".22">3'-2&quot; [0.97 M]</text>
<text x="723.4" y="677.5" font-size="4.9" fill="#111" font-weight="bold" text-anchor="middle" textLength="20" lengthAdjust="spacingAndGlyphs" transform="rotate(-90 723.4 677.5)" stroke="#111" stroke-width=".22">3'-11&quot; [1.20 M]</text>
<text x="712.3" y="695.5" font-size="4.9" fill="#111" font-weight="bold" text-anchor="middle" textLength="10" lengthAdjust="spacingAndGlyphs" transform="rotate(-90 712.3 695.5)" stroke="#111" stroke-width=".22">9&quot; [0.23 M]</text>
<text x="739.1" y="699" font-size="4.9" fill="#111" font-weight="bold" text-anchor="middle" textLength="23" lengthAdjust="spacingAndGlyphs" transform="rotate(-90 739.1 699)" stroke="#111" stroke-width=".22">16'-8&quot; [5.09 M]</text>
<text x="758.1" y="722" font-size="4.9" fill="#111" font-weight="bold" text-anchor="middle" textLength="23" lengthAdjust="spacingAndGlyphs" transform="rotate(-90 758.1 722)" stroke="#111" stroke-width=".22">12'-4&quot; [3.77 M]</text>
<text x="712.3" y="741" font-size="4.9" fill="#111" font-weight="bold" text-anchor="middle" textLength="21" lengthAdjust="spacingAndGlyphs" transform="rotate(-90 712.3 741)" stroke="#111" stroke-width=".22">8'-5&quot; [2.57 M]</text>
<text x="616.3" y="698" font-size="4.9" fill="#111" font-weight="bold" text-anchor="middle" textLength="15" lengthAdjust="spacingAndGlyphs" transform="rotate(-90 616.3 698)" stroke="#111" stroke-width=".22">10&quot; [0.26 M]</text>
<ellipse cx="637.7" cy="351.3" rx="11.500" ry="8.300" fill="none" stroke="#efefef" stroke-width=".8"/>
<text x="628" y="354.3" font-size="7.7" fill="#585858" font-weight="normal" text-anchor="start" textLength="19.4" lengthAdjust="spacingAndGlyphs" >190.31</text>
<text x="651.5" y="353.8" font-size="5.1" fill="#5a5a5a" font-weight="normal" text-anchor="start" textLength="43.2" lengthAdjust="spacingAndGlyphs" >PEAK OF THE ROOF</text>
<ellipse cx="637.7" cy="372.6" rx="11.500" ry="8.300" fill="none" stroke="#efefef" stroke-width=".8"/>
<text x="628" y="375.6" font-size="7.7" fill="#585858" font-weight="normal" text-anchor="start" textLength="19.4" lengthAdjust="spacingAndGlyphs" >189.68</text>
<text x="652.5" y="375" font-size="5.1" fill="#5a5a5a" font-weight="normal" text-anchor="start" textLength="49" lengthAdjust="spacingAndGlyphs" >TOP OF THE PARAPET</text>
<ellipse cx="637.7" cy="385.6" rx="11.500" ry="8.300" fill="none" stroke="#efefef" stroke-width=".8"/>
<text x="628" y="388.6" font-size="7.7" fill="#585858" font-weight="normal" text-anchor="start" textLength="19.4" lengthAdjust="spacingAndGlyphs" >189.53</text>
<text x="653" y="388" font-size="5.1" fill="#5a5a5a" font-weight="normal" text-anchor="start" textLength="53" lengthAdjust="spacingAndGlyphs" >TOP OF THE FLAT ROOF</text>
<ellipse cx="637.7" cy="397" rx="11.500" ry="8.300" fill="none" stroke="#efefef" stroke-width=".8"/>
<text x="628" y="400" font-size="7.7" fill="#585858" font-weight="normal" text-anchor="start" textLength="19.4" lengthAdjust="spacingAndGlyphs" >189.23</text>
<text x="653" y="399.2" font-size="5.1" fill="#5a5a5a" font-weight="normal" text-anchor="start" textLength="63" lengthAdjust="spacingAndGlyphs" >CEILING OF SECOND FLOOR</text>
<text x="653" y="405.4" font-size="5.1" fill="#5a5a5a" font-weight="normal" text-anchor="start" textLength="56" lengthAdjust="spacingAndGlyphs" >/TOP OF THE MAIN WALL</text>
<ellipse cx="637.7" cy="414.5" rx="11.500" ry="8.300" fill="none" stroke="#efefef" stroke-width=".8"/>
<text x="628" y="417.5" font-size="7.7" fill="#585858" font-weight="normal" text-anchor="start" textLength="19.4" lengthAdjust="spacingAndGlyphs" >188.46</text>
<text x="652.5" y="417" font-size="5.1" fill="#5a5a5a" font-weight="normal" text-anchor="start" textLength="39" lengthAdjust="spacingAndGlyphs" >TOP OF THE EAVE</text>
<ellipse cx="637.7" cy="427.6" rx="11.500" ry="8.300" fill="none" stroke="#efefef" stroke-width=".8"/>
<text x="628" y="430.6" font-size="7.7" fill="#585858" font-weight="normal" text-anchor="start" textLength="19.4" lengthAdjust="spacingAndGlyphs" >188.31</text>
<text x="654" y="431.5" font-size="5.1" fill="#5a5a5a" font-weight="normal" text-anchor="start" textLength="50" lengthAdjust="spacingAndGlyphs" >BOTTOM OF THE EAVE</text>
<ellipse cx="637.7" cy="487.4" rx="11.500" ry="8.300" fill="none" stroke="#efefef" stroke-width=".8"/>
<text x="628" y="490.4" font-size="7.7" fill="#585858" font-weight="normal" text-anchor="start" textLength="19.4" lengthAdjust="spacingAndGlyphs" >186.33</text>
<text x="653" y="489.8" font-size="5.1" fill="#5a5a5a" font-weight="normal" text-anchor="start" textLength="36" lengthAdjust="spacingAndGlyphs" >SECOND FLOOR</text>
<ellipse cx="637.9" cy="602.2" rx="11.500" ry="8.300" fill="none" stroke="#efefef" stroke-width=".8"/>
<text x="628.2" y="605.2" font-size="7.7" fill="#585858" font-weight="normal" text-anchor="start" textLength="19.4" lengthAdjust="spacingAndGlyphs" >182.98</text>
<text x="653.5" y="604.7" font-size="5.1" fill="#5a5a5a" font-weight="normal" text-anchor="start" textLength="28.8" lengthAdjust="spacingAndGlyphs" >MAIN FLOOR</text>
<ellipse cx="590.5" cy="616.5" rx="11.500" ry="8.300" fill="none" stroke="#efefef" stroke-width=".8"/>
<text x="580.8" y="619.5" font-size="7.7" fill="#585858" font-weight="normal" text-anchor="start" textLength="19.4" lengthAdjust="spacingAndGlyphs" >182.83</text>
<text x="608" y="618.5" font-size="5.1" fill="#5a5a5a" font-weight="normal" text-anchor="start" textLength="51.8" lengthAdjust="spacingAndGlyphs" >UNDER SIDE OF JOISTS</text>
<text x="608" y="624.5" font-size="5.1" fill="#5a5a5a" font-weight="normal" text-anchor="start" textLength="36" lengthAdjust="spacingAndGlyphs" >OF MAIN FLOOR</text>
<text x="608" y="630.5" font-size="5.1" fill="#5a5a5a" font-weight="normal" text-anchor="start" textLength="42" lengthAdjust="spacingAndGlyphs" >FOR JOISTS ABOVE</text>
<text x="608" y="636.5" font-size="5.1" fill="#5a5a5a" font-weight="normal" text-anchor="start" textLength="18.5" lengthAdjust="spacingAndGlyphs" >GARAGE</text>
<ellipse cx="637.7" cy="652.9" rx="11.500" ry="8.300" fill="none" stroke="#efefef" stroke-width=".8"/>
<text x="628" y="655.9" font-size="7.7" fill="#585858" font-weight="normal" text-anchor="start" textLength="19.4" lengthAdjust="spacingAndGlyphs" >181.51</text>
<text x="653" y="655" font-size="5.1" fill="#5a5a5a" font-weight="normal" text-anchor="start" textLength="15" lengthAdjust="spacingAndGlyphs" >FOYER</text>
<ellipse cx="591.7" cy="686.2" rx="11.500" ry="8.300" fill="none" stroke="#efefef" stroke-width=".8"/>
<text x="582" y="689.2" font-size="7.7" fill="#585858" font-weight="normal" text-anchor="start" textLength="19.4" lengthAdjust="spacingAndGlyphs" >180.54</text>
<text x="607" y="683" font-size="5.1" fill="#5a5a5a" font-weight="normal" text-anchor="start" textLength="50.5" lengthAdjust="spacingAndGlyphs" >EDGE OF THE GARAGE</text>
<ellipse cx="638" cy="693.2" rx="11.500" ry="8.300" fill="none" stroke="#efefef" stroke-width=".8"/>
<text x="628.7" y="696.2" font-size="7.7" fill="#585858" font-weight="normal" text-anchor="start" textLength="18.5" lengthAdjust="spacingAndGlyphs" >180.31</text>
<text x="653" y="695.6" font-size="5.1" fill="#5a5a5a" font-weight="normal" text-anchor="start" textLength="47" lengthAdjust="spacingAndGlyphs" >ESTABLISHED GRADE</text>
<ellipse cx="591.7" cy="702.4" rx="11.500" ry="8.300" fill="none" stroke="#efefef" stroke-width=".8"/>
<text x="582" y="705.4" font-size="7.7" fill="#585858" font-weight="normal" text-anchor="start" textLength="19.4" lengthAdjust="spacingAndGlyphs" >180.28</text>
<text x="569.5" y="717.7" font-size="5.1" fill="#5a5a5a" font-weight="normal" text-anchor="start" textLength="47.5" lengthAdjust="spacingAndGlyphs" >MID POINT BETWEEN</text>
<text x="569.5" y="723.7" font-size="5.1" fill="#5a5a5a" font-weight="normal" text-anchor="start" textLength="53" lengthAdjust="spacingAndGlyphs" >FINISH BASEMENT AND</text>
<text x="569.5" y="729.7" font-size="5.1" fill="#5a5a5a" font-weight="normal" text-anchor="start" textLength="52" lengthAdjust="spacingAndGlyphs" >UNDER SIDE OF JOISTS</text>
<text x="569.5" y="735.7" font-size="5.1" fill="#5a5a5a" font-weight="normal" text-anchor="start" textLength="36.5" lengthAdjust="spacingAndGlyphs" >OF MAIN FLOOR</text>
<ellipse cx="638" cy="781.6" rx="11.500" ry="8.300" fill="none" stroke="#efefef" stroke-width=".8"/>
<text x="628.3" y="784.6" font-size="7.7" fill="#585858" font-weight="normal" text-anchor="start" textLength="19.4" lengthAdjust="spacingAndGlyphs" >177.74</text>
<text x="652.3" y="783" font-size="5.1" fill="#5a5a5a" font-weight="normal" text-anchor="start" textLength="24.7" lengthAdjust="spacingAndGlyphs" >BASEMENT</text>
<rect x="627.800" y="800.200" width="20.700" height="20.300" fill="url(#wood)" stroke="#222" stroke-width="1" stroke-dasharray="2.500 1.200"/>
<rect x="627.300" y="827.500" width="21.200" height="21.100" fill="#d9dadb"/>
<rect class="k" x="710.500" y="800.500" width="21" height="20"/>
<rect class="k" x="710.500" y="828.500" width="21" height="20"/>
<text x="654" y="813.6" font-size="6.4" fill="#1a1a1a" font-weight="bold" text-anchor="start" textLength="45" lengthAdjust="spacingAndGlyphs" >WOOD CLADDING</text>
<text x="654" y="841.1" font-size="6.4" fill="#1a1a1a" font-weight="bold" text-anchor="start" textLength="46.7" lengthAdjust="spacingAndGlyphs" >METAL CLADDING</text>
<text x="737.8" y="810.2" font-size="6.4" fill="#1a1a1a" font-weight="bold" text-anchor="start" textLength="21.2" lengthAdjust="spacingAndGlyphs" >STUCCO</text>
<text x="737.8" y="838" font-size="6.4" fill="#1a1a1a" font-weight="bold" text-anchor="start" textLength="43" lengthAdjust="spacingAndGlyphs" >ARTIFICIAL LIME</text>
<text x="737.8" y="845.6" font-size="6.4" fill="#1a1a1a" font-weight="bold" text-anchor="start" textLength="16.8" lengthAdjust="spacingAndGlyphs" >STONE</text>
</svg>
<svg id="tb" width="1900" height="1188" viewBox="0 0 1900 1188" style="left:0;top:0;pointer-events:none" font-family="Liberation Sans, sans-serif">
<g fill="none" stroke="#222" stroke-width="1.100">
<rect x="281.600" y="959.500" width="1370.900" height="97"/>
<path d="M732.4 959.500V1056.500"/>
<path d="M896.8 959.500V1056.500"/>
<path d="M1110 959.500V1056.500"/>
<path d="M1464.8 959.500V1056.500"/>
<path d="M1572.5 959.500V1056.500"/>
<path d="M732.400 1005.200H896.800"/>
</g>
<text x="294" y="969.7" font-size="8.3" fill="#111" font-weight="normal" textLength="72" lengthAdjust="spacingAndGlyphs" >GENERAL NOTES:</text>
<text x="294" y="976.9" font-size="4.15" fill="#111" font-weight="bold" textLength="115" lengthAdjust="spacingAndGlyphs" >THIS DRAWING IS COPYRIGHTED AND MUST NOT BE USED,</text>
<text x="294" y="981.7" font-size="4.15" fill="#111" font-weight="bold" textLength="120" lengthAdjust="spacingAndGlyphs" >REPRODUCED, OR REVISED WITHOUT WRITTEN PERMISSION.</text>
<text x="294" y="991.2" font-size="4.15" fill="#111" font-weight="bold" textLength="126" lengthAdjust="spacingAndGlyphs" >ALL DIMENSIONS ARE IN FEET AND INCHES UNLESS OTHERWISE</text>
<text x="294" y="996.0" font-size="4.15" fill="#111" font-weight="bold" textLength="59" lengthAdjust="spacingAndGlyphs" >NOTED. VERIFY DIMENSIONS.</text>
<text x="294" y="1000.9" font-size="4.15" fill="#111" font-weight="bold" textLength="60.5" lengthAdjust="spacingAndGlyphs" >DO NOT SCALE THIS DRAWING.</text>
<text x="294" y="1010.7" font-size="4.15" fill="#111" font-weight="bold" textLength="130" lengthAdjust="spacingAndGlyphs" >REPORT INCONSISTENCIES AND OMISSIONS TO THE CONSULTANT</text>
<text x="294" y="1015.5" font-size="4.15" fill="#111" font-weight="bold" textLength="120" lengthAdjust="spacingAndGlyphs" >FOR CLARIFICATION BEFORE COMMENCING WITH THE WORK.</text>
<text x="294" y="1025.2" font-size="4.15" fill="#111" font-weight="bold" textLength="134" lengthAdjust="spacingAndGlyphs" >DEVIATIONS FROM THE CONTRACT DOCUMENTS WITHOUT WRITTEN</text>
<text x="294" y="1030.0" font-size="4.15" fill="#111" font-weight="bold" textLength="133.5" lengthAdjust="spacingAndGlyphs" >APPROVAL FROM THE CONSULTANT ARE SUBJECT TO CORRECTION</text>
<text x="294" y="1034.9" font-size="4.15" fill="#111" font-weight="bold" textLength="67" lengthAdjust="spacingAndGlyphs" >AT THE CONTRACTOR'S EXPENSE.</text>
<text x="441.5" y="974.4" font-size="4.15" fill="#111" font-weight="bold" textLength="130" lengthAdjust="spacingAndGlyphs" >ALL WORK SHALL BE CARRIED OUT IN STRICT ACCORDANCE WITH</text>
<text x="441.5" y="979.3" font-size="4.15" fill="#111" font-weight="bold" textLength="128" lengthAdjust="spacingAndGlyphs" >THE REQUIREMENTS OF THE LATEST REVISION OF THE ONTARIO</text>
<text x="441.5" y="984.2" font-size="4.15" fill="#111" font-weight="bold" textLength="18.5" lengthAdjust="spacingAndGlyphs" >BUILDING</text>
<text x="441.5" y="989.2" font-size="4.15" fill="#111" font-weight="bold" textLength="13.5" lengthAdjust="spacingAndGlyphs" >&#160;CODE.</text>
<text x="441.5" y="998.4" font-size="4.15" fill="#111" font-weight="bold" textLength="78" lengthAdjust="spacingAndGlyphs" >USE ONLY LATEST REVISED DRAWINGS.</text>
<text x="441.5" y="1008.2" font-size="4.15" fill="#111" font-weight="bold" textLength="121" lengthAdjust="spacingAndGlyphs" >ALL DIMENSIONS AND INFORMATION SHALL BE CHECKED AND</text>
<text x="441.5" y="1012.8" font-size="4.15" fill="#111" font-weight="bold" textLength="17.5" lengthAdjust="spacingAndGlyphs" >VERIFIED</text>
<text x="441.5" y="1018.0" font-size="4.15" fill="#111" font-weight="bold" textLength="125" lengthAdjust="spacingAndGlyphs" >ON THE JOB AND ANY VARIANCES OR DISCREPANCIES MUST BE</text>
<text x="441.5" y="1022.7" font-size="4.15" fill="#111" font-weight="bold" textLength="124.5" lengthAdjust="spacingAndGlyphs" >REPORTED TO THE DESIGN FIRM BY PHONE AND SUBSEQUENT</text>
<text x="441.5" y="1027.5" font-size="4.15" fill="#111" font-weight="bold" textLength="121" lengthAdjust="spacingAndGlyphs" >WRITTEN CONFIRMATION PRIOR TO COMMENCEMENT OF THE</text>
<text x="441.5" y="1032.5" font-size="4.15" fill="#111" font-weight="bold" textLength="13" lengthAdjust="spacingAndGlyphs" >WORK.</text>
<text x="441.5" y="1042.0" font-size="4.15" fill="#111" font-weight="bold" textLength="130.5" lengthAdjust="spacingAndGlyphs" >ALL STRUCTURAL DESIGN MUST BE REVIEWED AND APPROVED BY</text>
<text x="441.5" y="1047.0" font-size="4.15" fill="#111" font-weight="bold" textLength="124.5" lengthAdjust="spacingAndGlyphs" >CERTIFIED STRUCTURAL ENGINEER PRIOR TO CONSTRUCTION.</text>
<text x="591.5" y="973.3" font-size="4.1" fill="#111" font-weight="bold" textLength="93" lengthAdjust="spacingAndGlyphs" >THE UNDERSIGNED HAS REVIEWED AND TAKES</text>
<text x="591.5" y="978.2" font-size="4.1" fill="#111" font-weight="bold" textLength="96" lengthAdjust="spacingAndGlyphs" >RESPONSIBILITY FOR THIS DESIGN, AND HAS THE</text>
<text x="591.5" y="983.0" font-size="4.1" fill="#111" font-weight="bold" textLength="122" lengthAdjust="spacingAndGlyphs" >QUALIFICATIONS AND MEETS THE REQUIREMENTS SET OUT IN</text>
<text x="591.5" y="987.8" font-size="4.1" fill="#111" font-weight="bold" textLength="119.5" lengthAdjust="spacingAndGlyphs" >THE O.B.C TO BE A DESIGNER. QUALIFICATION INFORMATION</text>
<text x="591.5" y="992.7" font-size="4.1" fill="#111" font-weight="bold" textLength="110" lengthAdjust="spacingAndGlyphs" >REQUIRED UNLESS DESIGN IS EXEMPT UNDER DIVISION</text>
<text x="591.5" y="997.8" font-size="4.1" fill="#111" font-weight="bold" textLength="96" lengthAdjust="spacingAndGlyphs" >C-3.2.5.1. OF THE 2012 O.B.C ( OR 3.2.5.1. OF THE</text>
<text x="591.5" y="1003.3" font-size="4.1" fill="#111" font-weight="bold" textLength="21.5" lengthAdjust="spacingAndGlyphs" >1997 O.B.C)</text>
<text x="740.8" y="971.8" font-size="7.4" fill="#1a1a1a" font-weight="normal" textLength="38.8" lengthAdjust="spacingAndGlyphs" >PROJECT:</text>
<text x="741.7" y="989.5" font-size="9.3" fill="#1a1a1a" font-weight="normal" textLength="128.8" lengthAdjust="spacingAndGlyphs" xml:space="preserve">487 COLD STREAM &#160; AVENUE</text>
<text x="765" y="1029.1" font-size="8.2" fill="#1a1a1a" font-weight="normal" textLength="97" lengthAdjust="spacingAndGlyphs" >ARCHITECTURAL DESIGN</text>
<text x="904.3" y="979" font-size="7.6" fill="#1a1a1a" font-weight="normal" textLength="63.2" lengthAdjust="spacingAndGlyphs" >DRAWING TITLE:</text>
<text x="978.8" y="979" font-size="7.6" fill="#1a1a1a" font-weight="normal" textLength="97.5" lengthAdjust="spacingAndGlyphs" >MAIN(NORTH)&#160; ELEVATION</text>
<text x="904.3" y="1022" font-size="7.6" fill="#1a1a1a" font-weight="normal" textLength="27.4" lengthAdjust="spacingAndGlyphs" >SCALE:</text>
<text x="949" y="1022" font-size="6.6" fill="#1a1a1a" font-weight="normal" textLength="22" lengthAdjust="spacingAndGlyphs" >1/8&quot;=1'</text>
<text x="904.3" y="1043.7" font-size="7.6" fill="#1a1a1a" font-weight="normal" textLength="76.7" lengthAdjust="spacingAndGlyphs" >PAPER SIZE: 11&quot;x17&quot;</text>
<rect x="1139" y="963.300" width="136.500" height="90.500" fill="none" stroke="#ececec" stroke-width=".8"/>
<g fill="#1f4e8b">
<rect x="1115.600" y="964.200" width="8.200" height="70.500"/><rect x="1130.300" y="964.200" width="8.500" height="70.500"/><rect x="1123" y="996.400" width="8" height="4.300"/>
<rect x="1144.800" y="982.200" width="8.700" height="52.500"/>
<path d="M1158.700 1034.700V995C1158.700 986.500 1163.500 982.200 1170 982.200H1172.900V986.600C1169.500 986.600 1167.700 989.300 1167.700 994.500V1034.700Z"/>
<rect x="1178.100" y="982.200" width="8.500" height="52.500"/>
<path d="M1192.3 1034.7V982.2H1193.1Q1201.3 982.2 1201.3 990.4V1034.7Z"/>
<path d="M1207 1034.7V982.2H1207.8Q1216 982.2 1216 990.4V1034.7Z"/>
<path d="M1222.200 1030.500V1009C1222.200 1003.500 1225.500 999.700 1231.200 999.700V1034.700H1226.200Q1222.200 1034.700 1222.200 1030.500Z"/>
<path d="M1226.400 982.200H1237.400Q1245.400 982.200 1245.400 990.400V1034.700H1236.400V992.500Q1236.400 986.300 1226.400 982.200Z"/>
<rect x="1251" y="982.200" width="9" height="52.500"/>
<path d="M1265.3 1034.7V982.2H1266.5Q1274.7 982.2 1274.7 990.4V1034.7Z"/>
</g>
<text x="1115" y="1052.700" font-size="10.6" fill="#3c3c3c" stroke="#3c3c3c" stroke-width=".25" textLength="60.300" lengthAdjust="spacing">Hirman</text>
<text x="1185.200" y="1052.700" font-size="10.6" fill="#c9a43a" stroke="#c9a43a" stroke-width=".25" textLength="90" lengthAdjust="spacing">Architects</text>
<text x="1278" y="1024.8" font-size="6.9" fill="#111" font-weight="normal" textLength="73.5" lengthAdjust="spacingAndGlyphs" >48 MCCALLUM DRIVE</text>
<text x="1278" y="1033.4" font-size="6.9" fill="#111" font-weight="normal" textLength="102" lengthAdjust="spacingAndGlyphs" >RICHMOND HILL,ON. ,L4C 7S8</text>
<text x="1278" y="1043.2" font-size="6.9" fill="#111" font-weight="normal" textLength="56.5" lengthAdjust="spacingAndGlyphs" >TEL:647 4013922</text>
<text x="1278" y="1052.3" font-size="6.9" fill="#111" font-weight="normal" textLength="107.4" lengthAdjust="spacingAndGlyphs" >EMAIL: hirman.studio@gmail.com</text>
<text x="1477.6" y="971.7" font-size="7" fill="#1a1a1a" font-weight="normal" textLength="47.4" lengthAdjust="spacingAndGlyphs" >ISSUED FOR</text>
<text x="1476" y="983" font-size="6" fill="#1a1a1a" font-weight="normal" textLength="50.7" lengthAdjust="spacingAndGlyphs" >ZONING REVIEW</text>
<text x="1536.5" y="983" font-size="6" fill="#1a1a1a" font-weight="normal" textLength="32" lengthAdjust="spacingAndGlyphs" >2023-04-02</text>
<text x="1609" y="1017.2" font-size="20.5" fill="#111" font-weight="normal" textLength="25.8" lengthAdjust="spacingAndGlyphs" >A5</text>
</svg>
<div id="wm" class="t" style="left:567.2px;top:1093.1px;font-family:'DejaVu Sans',sans-serif;font-size:39.85px;color:rgba(214,206,224,.93);line-height:46px">RE/MAX GOLD REALTY INC., Brokerage</div>
<svg id="thumb" width="1900" height="1188" viewBox="0 0 1900 1188" style="left:0;top:0;pointer-events:none">
<defs><linearGradient id="tw" x1="0" y1="0" x2="1" y2="0"><stop offset="0" stop-color="#0d0526"/><stop offset=".45" stop-color="#1c0a48"/><stop offset=".62" stop-color="#5a0c90"/><stop offset=".8" stop-color="#2a0a5c"/><stop offset="1" stop-color="#1a0640"/></linearGradient></defs>
<rect x="1681.200" y="1039.100" width="200.200" height="129.400" rx="7" fill="#000"/>
<rect x="1686.200" y="1045.200" width="190.200" height="118.800" fill="#1e1e1e" stroke="#fff" stroke-width="1.100"/>
<rect x="1686.800" y="1045.800" width="189" height="3.700" fill="#410fa3"/>
<path d="M1690 1047.600h2M1694.500 1047.600h5M1701.500 1047.600h2.500M1706 1047.600h2.500M1710 1047.600h2.500M1714 1047.600h4M1720 1047.600h3" stroke="#e8e0f8" stroke-width="1"/>
<path d="M1806 1047.600h2M1811 1047.600h2M1816 1047.600h2M1821 1047.600h2M1826 1047.600h2M1831 1047.600h2M1836 1047.600h2M1841 1047.600h2M1846 1047.600h2M1851 1047.600h2M1856 1047.600h9M1867 1047.600h5" stroke="#e8e0f8" stroke-width="1" opacity=".85"/>
<rect x="1686.800" y="1049.500" width="189" height="5.300" fill="#1e1e1e"/>
<rect x="1703.500" y="1050" width="31" height="4.800" fill="#323232"/>
<circle cx="1689.400" cy="1052.200" r=".9" fill="#fe5f57"/><circle cx="1692.300" cy="1052.200" r=".9" fill="#febc2e"/><circle cx="1695.200" cy="1052.200" r=".9" fill="#28c840"/>
<path d="M1699 1052.200h2.200M1706 1052.200h2M1709.500 1052.200h12M1731 1052.200h1.500M1737 1052.200h1.500M1740 1052.200h4.500" stroke="#d8d8d8" stroke-width="1"/>
<path d="M1857 1052.200h2M1861.800 1052.200h2M1866.600 1052.200h2" stroke="#d8d8d8" stroke-width="1.200"/><circle cx="1872.300" cy="1052.200" r="1.300" fill="#6ab8f0"/>
<rect x="1686.800" y="1054.800" width="189" height="6.500" fill="#323232"/>
<path d="M1688.500 1058h5.500M1696.500 1058h3.500M1703 1058h6.500M1713 1058h3.500M1817 1058h13M1832.500 1058h2M1844 1058h2M1850 1058h2M1857 1058h2M1863 1058h2M1869 1058h2" stroke="#dcdcdc" stroke-width="1.100"/>
<rect x="1686.800" y="1061.300" width="189" height="91.700" fill="#1d1d1d"/>
<rect x="1869.300" y="1061.300" width="6.500" height="91.700" fill="#323232"/>
<rect x="1687.900" y="1063" width="6.200" height="44" rx=".8" fill="#323232"/>
<rect x="1688.400" y="1065.500" width="5.200" height="5.100" fill="#1473e6"/>
<path d="M1689.800 1066.600l2.400 3M1692.200 1066.600l-2.400 3" stroke="#fff" stroke-width=".8"/>
<path d="M1689.500 1076.3l3-3" stroke="#d0d0d0" stroke-width="1"/>
<path d="M1689.500 1082.1l3-3" stroke="#d0d0d0" stroke-width="1"/>
<path d="M1689.500 1088.0l3-3" stroke="#d0d0d0" stroke-width="1"/>
<path d="M1689.500 1093.8999999999999l3-3" stroke="#d0d0d0" stroke-width="1"/>
<path d="M1689.500 1099.8l3-3" stroke="#d0d0d0" stroke-width="1"/>
<path d="M1690 1104h2.500" stroke="#d0d0d0" stroke-width=".8"/>
<rect x="1871.700" y="1064.2" width="1.900" height="1.800" fill="#cfcfcf"/>
<rect x="1871.700" y="1070.0" width="1.900" height="1.800" fill="#cfcfcf"/>
<rect x="1871.700" y="1075.9" width="1.900" height="1.800" fill="#cfcfcf"/>
<rect x="1871.700" y="1110.7" width="1.900" height="1.800" fill="#cfcfcf"/>
<rect x="1871.700" y="1115.7" width="1.900" height="1.800" fill="#cfcfcf"/>
<rect x="1871.700" y="1120.7" width="1.900" height="1.800" fill="#cfcfcf"/>
<rect x="1871.700" y="1125.2" width="1.900" height="1.800" fill="#cfcfcf"/>
<rect x="1871.700" y="1130.2" width="1.900" height="1.800" fill="#cfcfcf"/>
<rect x="1871.700" y="1136.2" width="1.900" height="1.800" fill="#cfcfcf"/>
<rect x="1871.700" y="1140.7" width="1.900" height="1.800" fill="#cfcfcf"/>
<rect x="1871.700" y="1145.7" width="1.900" height="1.800" fill="#cfcfcf"/>
<rect x="1711.200" y="1061.300" width="142.600" height="91.700" fill="#fff"/>
<g fill="none" stroke="#c4c4c4" stroke-width=".6">
<rect x="1751.200" y="1081.100" width="70" height="50.600" stroke="#dedede"/>
<rect x="1752" y="1087.900" width="64.300" height="38.900"/>
<rect x="1761.800" y="1098.500" width="46" height="19.100"/>
<path d="M1752 1087.900L1761.800 1098.500M1816.300 1087.900L1807.800 1098.500M1752 1126.800L1761.800 1117.600M1816.300 1126.800L1807.800 1117.600"/>
<path d="M1756 1091L1757.500 1123.500M1812.500 1091L1811.800 1123.500M1756 1091H1812.500M1757.500 1123.500H1811.800" stroke="#e0e0e0"/>
<path d="M1743 1089V1125M1824 1089V1125M1818 1102v12M1821 1104v8" stroke="#d8d8d8"/>
</g>
<path d="M1779 1113l2.500 -4.500 2.500 3.500 2.500 -5M1770 1115.500l2.500 1.500M1786.500 1112.500l2 1.500" fill="none" stroke="#888" stroke-width=".7"/>
<path d="M1783 1082.500l1.500 1.500 1.500 -1.500M1783 1130l1.500 1.500 1.500 -1.500" fill="none" stroke="#aaa" stroke-width=".6"/>
<path d="M1751.500 1134.200H1779" stroke="#bbb" stroke-width=".8"/>
<rect x="1714.300" y="1141" width="137" height="9.800" fill="none" stroke="#999" stroke-width=".5"/>
<path d="M1759.400 1141v9.800M1775.800 1141v9.800M1797.200 1141v9.800M1832.600 1141v9.800M1843.400 1141v9.800M1759.400 1145.600h16.400" stroke="#aaa" stroke-width=".5"/>
<g fill="#9a9a9a"><rect x="1715.600" y="1142" width="7.200" height=".7"/>
<rect x="1715.600" y="1143.30" width="12" height=".5"/>
<rect x="1715.600" y="1144.25" width="12.5" height=".5"/>
<rect x="1715.600" y="1145.20" width="11" height=".5"/>
<rect x="1715.600" y="1146.15" width="9" height=".5"/>
<rect x="1715.600" y="1147.10" width="13" height=".5"/>
<rect x="1715.600" y="1148.05" width="13" height=".5"/>
<rect x="1715.600" y="1149.00" width="8" height=".5"/>
<rect x="1730.300" y="1142.40" width="13" height=".5"/>
<rect x="1730.300" y="1143.35" width="12.5" height=".5"/>
<rect x="1730.300" y="1144.30" width="3" height=".5"/>
<rect x="1730.300" y="1145.25" width="8" height=".5"/>
<rect x="1730.300" y="1146.20" width="12" height=".5"/>
<rect x="1730.300" y="1147.15" width="12.5" height=".5"/>
<rect x="1730.300" y="1148.10" width="12" height=".5"/>
<rect x="1730.300" y="1149.05" width="12.5" height=".5"/>
<rect x="1745.300" y="1142.20" width="9.5" height=".5"/>
<rect x="1745.300" y="1143.15" width="10" height=".5"/>
<rect x="1745.300" y="1144.10" width="12" height=".5"/>
<rect x="1745.300" y="1145.05" width="11.5" height=".5"/>
<rect x="1745.300" y="1146.00" width="9" height=".5"/>
<rect x="1760.300" y="1142.200" width="4" height=".6"/><rect x="1760.300" y="1143.700" width="12.800" height=".8"/><rect x="1762.800" y="1147.700" width="9.600" height=".7"/>
<rect x="1776.600" y="1142.400" width="6.300" height=".6"/><rect x="1784" y="1142.400" width="9.700" height=".6"/><rect x="1776.600" y="1146.800" width="2.800" height=".6"/><rect x="1776.600" y="1148.900" width="7.600" height=".6"/>
<rect x="1814.600" y="1147.500" width="7" height=".5"/><rect x="1814.600" y="1148.400" width="10" height=".5"/><rect x="1814.600" y="1149.300" width="5.500" height=".5"/><rect x="1814.600" y="1150.100" width="10.600" height=".5"/>
<rect x="1833.800" y="1142" width="4.700" height=".6"/><rect x="1833.800" y="1143.200" width="9" height=".5"/><rect x="1847" y="1145.400" width="2.600" height="1.400" fill="#555"/></g>
<g fill="#1f4e8b"><rect x="1797.900" y="1141.600" width=".9" height="7.100"/><rect x="1799.400" y="1141.600" width=".9" height="7.100"/><rect x="1798.500" y="1144.700" width="1.200" height=".5"/>
<rect x="1800.9" y="1143.400" width=".9" height="5.300"/>
<rect x="1802.3" y="1143.400" width=".9" height="5.300"/>
<rect x="1804.2" y="1143.400" width=".9" height="5.300"/>
<rect x="1805.7" y="1143.400" width=".9" height="5.300"/>
<rect x="1807.2" y="1143.400" width=".9" height="5.300"/>
<rect x="1809.6" y="1143.400" width=".9" height="5.300"/>
<rect x="1811.1" y="1143.400" width=".9" height="5.300"/>
<rect x="1812.5" y="1143.400" width=".9" height="5.300"/>
<rect x="1813.5" y="1143.400" width=".9" height="5.300"/>
</g><rect x="1797.900" y="1149.400" width="16" height=".7" fill="#a89a60"/>
<rect x="1686.800" y="1153" width="189" height="10.500" fill="url(#tw)"/>
<rect x="1857.300" y="1151.300" width="14.900" height="9" fill="#fff" stroke="#e8e8e8" stroke-width=".5"/>
<rect x="1861" y="1153.800" width="7.500" height="4" fill="none" stroke="#ddd" stroke-width=".5"/>
<circle cx="1873.800" cy="1161.800" r="1" fill="#eee"/>
</svg>
</body></html>
